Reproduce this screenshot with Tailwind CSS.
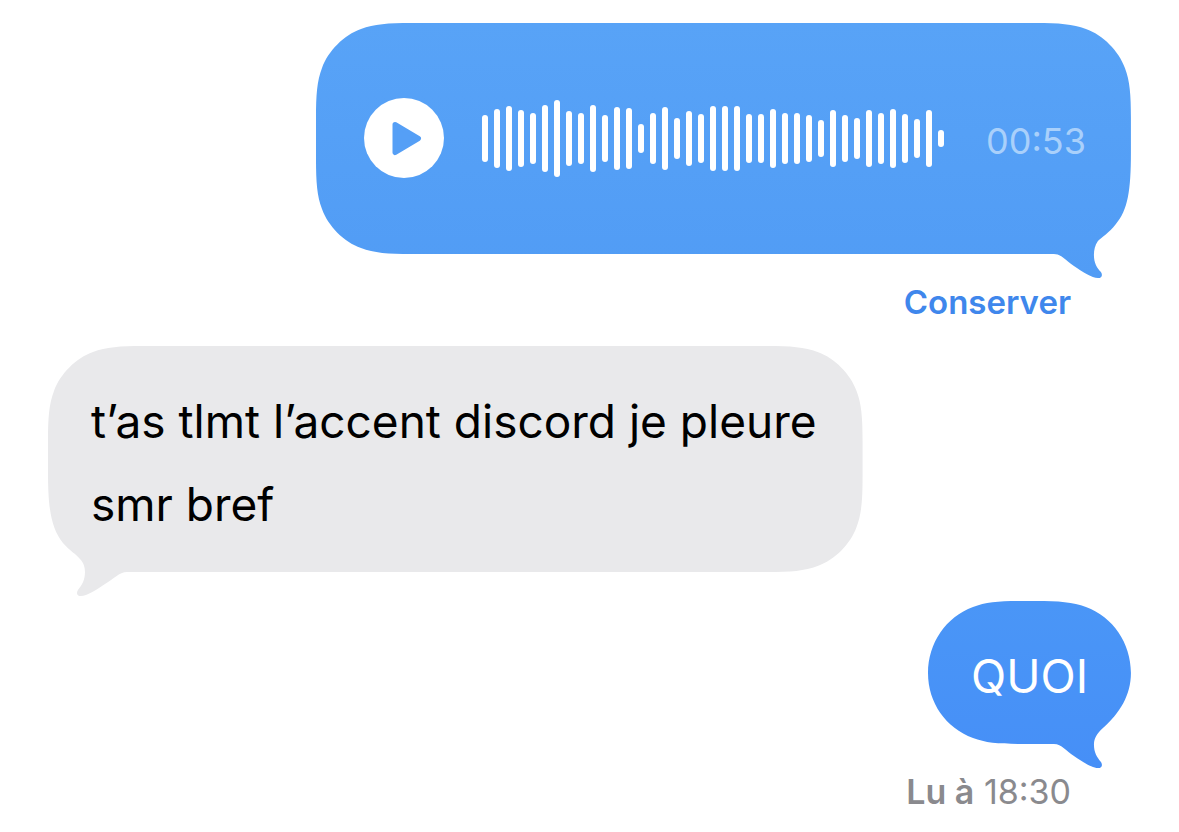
<!DOCTYPE html>
<html lang="fr">
<head>
<meta charset="utf-8">
<meta name="viewport" content="width=device-width, initial-scale=1">
<title>Messages</title>
<script src="https://cdn.jsdelivr.net/npm/@tailwindcss/browser@4"></script>
</head>
<body class="bg-white font-['Inter',sans-serif]">
<main class="flex flex-col px-12 pt-[23px] pb-5">

  <!-- Sent voice message -->
  <section class="relative flex items-center self-end pt-[75px] pb-[75px] pl-12 pr-[45px]" aria-label="Message vocal">
    <svg class="absolute top-0 left-0 w-full h-[calc(100%+24px)]" viewBox="0 0 815 255" preserveAspectRatio="none" aria-hidden="true">
      <defs><linearGradient id="voice" x1="0" y1="0" x2="0" y2="1"><stop offset="0" stop-color="#58a3f7"/><stop offset="1" stop-color="#519cf5"/></linearGradient></defs>
      <path fill="url(#voice)" d="M0 95C0 72 1 58 6 45C12 28 28 12 45 6C58 1 72 0 95 0H720C743 0 757 1 770 6C787 12 803 28 809 45C814 58 815 72 815 95V130C815 167 812 187 800 201C793 210 786 214 782 218C779 222 778 227 778 232C778 240 781 245 785 249C787 252 786 255 782 255C776 255 767 249 758 243C750 238 746 231 738 231H95C72 231 58 230 45 225C28 219 12 203 6 186C1 173 0 159 0 136Z"/>
    </svg>
    <button type="button" aria-label="Lire" class="relative self-start size-20 rounded-full bg-white">
      <svg class="size-20" viewBox="0 0 80 80" aria-hidden="true"><path d="M31 26.500L54.500 40.500L31 54.500Z" fill="#559ff6" stroke="#559ff6" stroke-width="5" stroke-linejoin="round"/></svg>
    </button>
    <div id="wave" class="relative ml-[38px] flex h-[81px] items-center gap-1.5" aria-hidden="true"></div>
    <time class="relative ml-[42px] text-4xl leading-10 text-[#a9d0fb] pt-1">00:53</time>
  </section>

  <button type="button" class="mt-7 mr-[60px] self-end text-[33px] leading-10 font-semibold text-[#3f87ec]">Conserver</button>

  <!-- Received message -->
  <section class="relative mt-6 self-start pt-[34px] pb-[26px] pl-[43px] pr-[46px]">
    <svg class="absolute top-0 left-0 w-full h-[calc(100%+24px)]" viewBox="0 0 815 250" preserveAspectRatio="none" aria-hidden="true">
      <path fill="#e9e9eb" d="M0 95C0 72 1 58 6 45C12 28 28 12 45 6C58 1 72 0 95 0H720C743 0 757 1 770 6C787 12 803 28 809 45C814 58 815 72 815 95V131C815 154 814 168 809 181C803 198 787 214 770 220C757 225 743 226 720 226H79C71 226 66 233 57 238C48 244 39 250 33 250C29 250 28 247 30 244C34 239 37 234 37 226C37 222 36 217 32 213C28 208 22 205 15 197C3 182 0 162 0 126Z"/>
    </svg>
    <p class="relative text-[46px] leading-[83px] text-black">t’as tlmt l’accent discord je pleure<br>smr bref</p>
  </section>

  <!-- Sent message -->
  <section class="relative mt-[29px] self-end px-[43px] pt-[34px] pb-[26px]">
    <svg class="absolute top-0 left-0 w-full h-[calc(100%+24px)]" viewBox="0 0 203 167" preserveAspectRatio="none" aria-hidden="true">
      <defs><linearGradient id="sent" x1="0" y1="0" x2="0" y2="1"><stop offset="0" stop-color="#4a96f7"/><stop offset="1" stop-color="#468ff7"/></linearGradient></defs>
      <path fill="url(#sent)" d="M0 72C0 42 18 16 45 6C58 1 72 0 95 0H108C131 0 145 1 158 6C185 16 203 42 203 72C203 94 192 112 175 127C169 132 166 138 166 143C166 152 169 156 173 161C175 164 174 167 170 167C164 167 155 161 146 155C138 150 134 143 126 143H95C72 143 58 142 45 137C18 127 0 102 0 72Z"/>
    </svg>
    <p class="relative text-[46px] leading-[83px] text-white">QUOI</p>
  </section>

  <p class="mt-7 mr-[60px] self-end text-[34px] leading-10 text-[#8a8a8e]"><span class="font-semibold">Lu à</span> <time>18:30</time></p>
</main>
<script>
  // Bar heights of the voice waveform, in pixels
  const levels = [47,59,65,57,51,67,77,55,51,67,47,63,61,29,51,63,41,55,49,65,65,65,49,49,59,51,51,47,37,57,47,41,57,51,59,49,39,57,17];
  const wave = document.getElementById('wave');
  for (const level of levels) {
    const bar = document.createElement('span');
    bar.className = 'w-1.5 rounded-full bg-white';
    bar.style.height = level + 'px';
    wave.append(bar);
  }
</script>
</body>
</html>
